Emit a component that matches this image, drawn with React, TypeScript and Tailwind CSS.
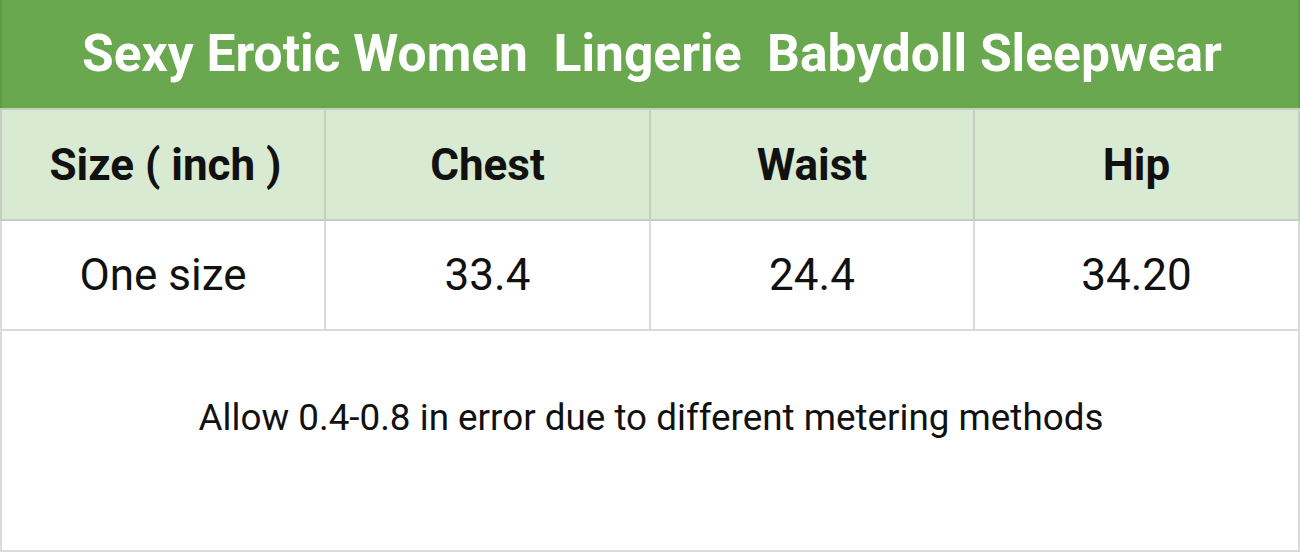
import React from "react";

const font = { fontFamily: "Roboto, 'Liberation Sans', sans-serif" };

export default function App() {
  const cols = ["Size ( inch )", "Chest", "Waist", "Hip"];
  const vals = ["One size", "33.4", "24.4", "34.20"];
  return (
    <div className="w-[1300px] h-[552px] bg-white flex flex-col text-[#111111]" style={font}>
      <div className="h-[108px] bg-[#6aa84f] border-l-2 border-r-2 border-[#5e9c45] flex items-center justify-center pl-[4px]">
        <span className="text-white font-bold text-[51.5px] leading-none whitespace-pre">
          Sexy Erotic Women  Lingerie  Babydoll Sleepwear
        </span>
      </div>
      <div className="grid grid-cols-[326px_325px_324px_325px] h-[113px] bg-[#d9ead3] border-t-2 border-b-2 border-[#c4cfc0]">
        {cols.map((c, i) => (
          <div
            key={c}
            className={`flex items-center justify-center border-r-2 border-[#c4cfc0] ${i === 0 ? "border-l-2 pl-[5px]" : ""}`}
          >
            <span className="font-bold text-[44px] leading-none">{c}</span>
          </div>
        ))}
      </div>
      <div className="grid grid-cols-[326px_325px_324px_325px] h-[110px] border-b-2 border-[#dadada]">
        {vals.map((v, i) => (
          <div
            key={i}
            className={`flex items-center justify-center border-r-2 border-[#dadada] ${i === 0 ? "border-l-2" : ""}`}
          >
            <span className="text-[44px] leading-none">{v}</span>
          </div>
        ))}
      </div>
      <div className="flex-1 border-l-2 border-r-2 border-b-2 border-[#dadada] flex items-center justify-center pb-[44px] pl-[2px]">
        <span className="text-[36.8px] leading-none">Allow 0.4-0.8 in error due to different metering methods</span>
      </div>
    </div>
  );
}
